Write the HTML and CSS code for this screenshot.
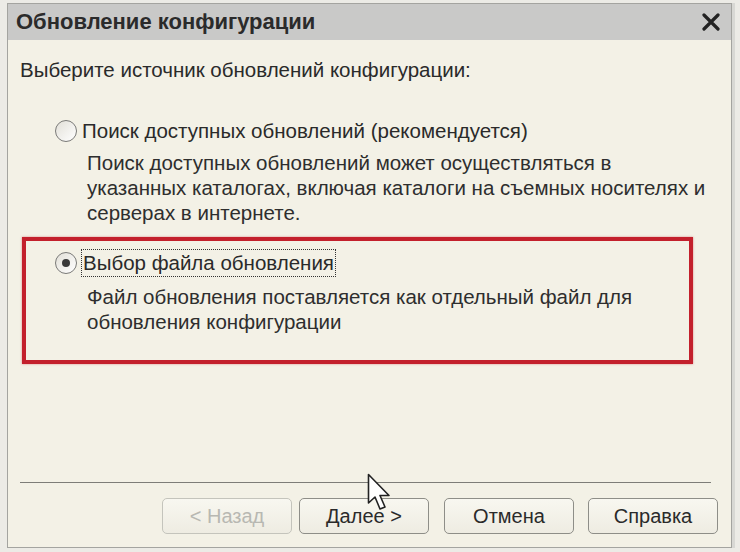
FILE: index.html
```html
<!DOCTYPE html>
<html lang="ru">
<head>
<meta charset="utf-8">
<link rel="stylesheet" href="styles.css">
</head>
<body>
<div class="screen">
  <div class="window">
    <div class="titlebar">
      <span class="title">Обновление конфигурации</span>
      <svg class="close" width="18" height="18" viewBox="0 0 18 18"><path d="M2 2 L16 16 M16 2 L2 16" stroke="#222" stroke-width="3.2" stroke-linecap="round"/></svg>
    </div>
    <div class="content">
      <div class="prompt">Выберите источник обновлений конфигурации:</div>
      <div class="option first">
        <div class="opt-row">
          <span class="radio"></span>
          <span class="opt-label">Поиск доступных обновлений (рекомендуется)</span>
        </div>
        <div class="desc">Поиск доступных обновлений может осуществляться в<br>указанных каталогах, включая каталоги на съемных носителях и<br>серверах в интернете.</div>
      </div>
      <div class="option highlight">
        <div class="opt-row">
          <span class="radio checked"></span>
          <span class="opt-label focus">Выбор файла обновления</span>
        </div>
        <div class="desc">Файл обновления поставляется как отдельный файл для<br>обновления конфигурации</div>
      </div>
      <div class="spacer"></div>
      <div class="separator"></div>
      <div class="buttons">
        <button class="btn disabled">&lt; Назад</button>
        <button class="btn">Далее &gt;</button>
        <button class="btn gap-left">Отмена</button>
        <button class="btn gap-left2">Справка</button>
      </div>
    </div>
  </div>
  <svg class="cursor" width="28" height="40" viewBox="0 0 28 40"><path d="M1.5 1.5 L1.5 30 L8 24 L13 36 L18 34 L13 22.5 L22 22.5 Z" fill="#fff" stroke="#222" stroke-width="1.6" stroke-linejoin="round"/></svg>
</div>
</body>
</html>
```
FILE: styles.css
```css
html, body {
  margin: 0;
  padding: 0;
}
body {
  background: #ecebe6;
  font-family: "Liberation Sans", Arial, sans-serif;
  color: #2a2a2a;
}
.screen {
  position: relative;
  width: 740px;
  height: 552px;
  padding: 3px 8px 4px 7px;
  box-sizing: border-box;
}
.window {
  height: 100%;
  border: 1px solid #a4a4a0;
  box-shadow: 3px 0 0 #d8d8d4;
  background: #f3f1e6;
  display: flex;
  flex-direction: column;
  box-sizing: border-box;
}
.titlebar {
  height: 36px;
  background: #c9c9c8;
  display: flex;
  align-items: center;
  justify-content: space-between;
  padding: 0 11px 0 8px;
  flex: none;
}
.title {
  font-size: 22px;
  font-weight: bold;
  color: #2b2b2b;
}
.close {
  display: block;
}
.content {
  flex: 1;
  display: flex;
  flex-direction: column;
  padding: 17px 13px 13px 12px;
}
.prompt {
  font-size: 20.5px;
  line-height: 26px;
}
.option {
  margin-left: 14px;
}
.option.first {
  margin-top: 35px;
  padding-left: 21px;
}
.opt-row {
  display: flex;
  align-items: center;
  gap: 5px;
  font-size: 20.5px;
  height: 26px;
}
.radio {
  width: 22px;
  height: 22px;
  border-radius: 50%;
  border: 1px solid #7a7a78;
  background: linear-gradient(135deg, #e2e0d8, #ffffff);
  box-sizing: border-box;
  display: flex;
  align-items: center;
  justify-content: center;
  flex: none;
}
.radio.checked::after {
  content: "";
  width: 8px;
  height: 8px;
  border-radius: 50%;
  background: #3a3a3a;
}
.opt-label.focus {
  outline: 1px dotted #333;
  outline-offset: 0;
  padding: 0 1px;
  line-height: 26px;
}
.desc {
  font-size: 20.5px;
  line-height: 25px;
  margin-top: 6px;
  margin-left: 32px;
  color: #2e2e2e;
}
.option.highlight {
  margin-top: 12px;
  margin-left: 2px;
  width: 671px;
  height: 127px;
  border: 4px solid #c3202c;
  box-shadow: 0 0 2px rgba(195, 32, 44, 0.5);
  box-sizing: border-box;
  padding: 9px 0 0 29px;
}
.option.highlight .desc {
  margin-top: 8px;
}
.spacer {
  flex: 1;
}
.separator {
  height: 1px;
  background: #7d7d78;
  margin: 0 7px 15px 0;
}
.buttons {
  display: flex;
  justify-content: flex-end;
  gap: 7px;
}
.btn {
  width: 130px;
  height: 36px;
  border: 1px solid #8e8e88;
  border-radius: 5px;
  background: linear-gradient(#f8f7f0, #eeece2);
  font-family: "Liberation Sans", Arial, sans-serif;
  font-size: 20px;
  color: #2a2a2a;
  padding: 0;
}
.btn.disabled {
  color: #b8b8b2;
  border-color: #c4c4bc;
}
.btn.gap-left {
  margin-left: 8px;
}
.btn.gap-left2 {
  margin-left: 7px;
}
.cursor {
  position: absolute;
  left: 367px;
  top: 473px;
}
```
